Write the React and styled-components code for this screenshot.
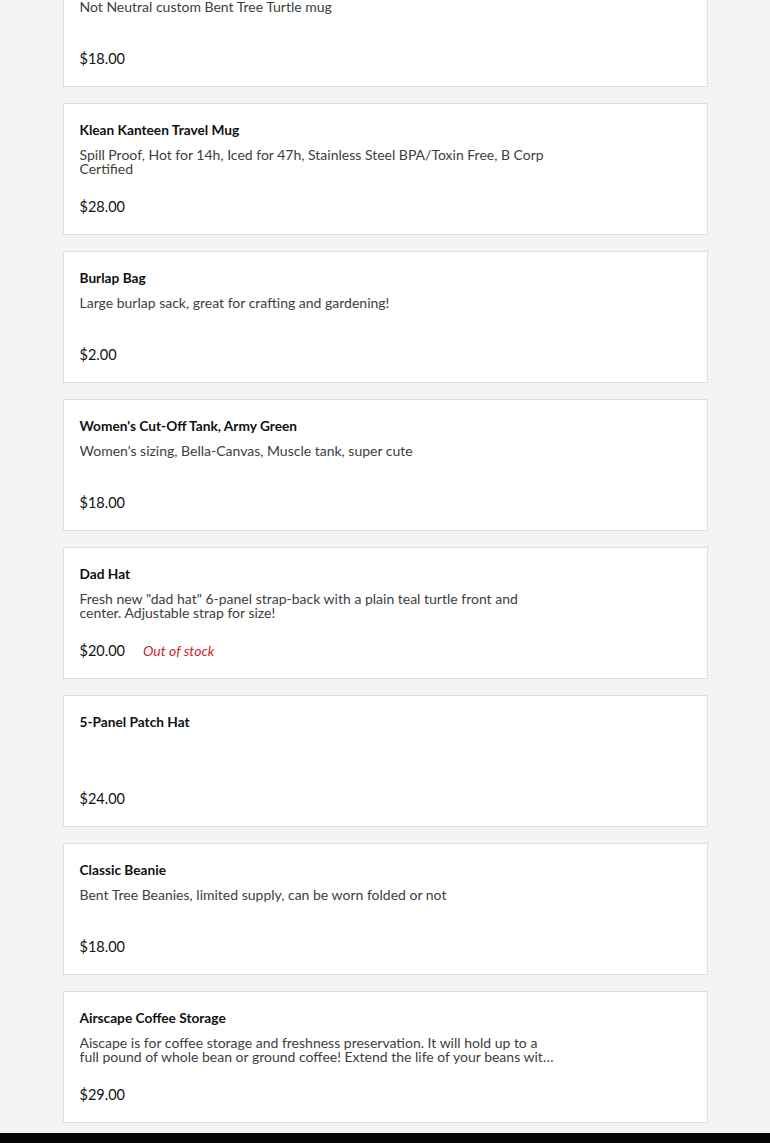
import React from 'react';
import styled, { createGlobalStyle } from 'styled-components';

const GlobalStyle = createGlobalStyle`
    html, body {
        margin: 0;
        padding: 0;
        background: #f3f5f4;
        font-family: Lato, "Liberation Sans", sans-serif;
        overflow: hidden;
    }
`;

const Page = styled.div`
    min-height: 1143px;
    display: flex;
    flex-direction: column;
`;

const List = styled.div`
    width: 645px;
    margin: -45px auto 0;
    padding-bottom: 10px;
    display: flex;
    flex-direction: column;
    gap: 16px;
`;

const Card = styled.div`
    box-sizing: border-box;
    height: 132px;
    background: #fff;
    border: 1px solid #dcdfde;
    padding: 16px 16px 17px;
    display: flex;
    flex-direction: column;
`;

const Title = styled.div`
    font-size: 13.7px;
    font-weight: 700;
    line-height: 20px;
    color: #111;
`;

const Description = styled.div`
    margin-top: 8px;
    max-width: 475px;
    height: 28px;
    font-size: 14px;
    line-height: 14px;
    color: #3d403f;
    display: -webkit-box;
    -webkit-line-clamp: 2;
    -webkit-box-orient: vertical;
    overflow: hidden;
`;

const PriceRow = styled.div`
    margin-top: auto;
    display: flex;
    align-items: center;
    gap: 18px;
    line-height: 20px;
`;

const Price = styled.span`
    font-size: 14.5px;
    color: #111;
`;

const Stock = styled.span`
    font-size: 14px;
    font-style: italic;
    color: #cc1f2f;
`;

const Footer = styled.div`
    flex: 1;
    background: #050505;
`;

const products = [
    { name: 'Bent Tree Turtle Mug', desc: 'Not Neutral custom Bent Tree Turtle mug', price: '$18.00' },
    { name: 'Klean Kanteen Travel Mug', desc: 'Spill Proof, Hot for 14h, Iced for 47h, Stainless Steel BPA/Toxin Free, B Corp Certified', price: '$28.00' },
    { name: 'Burlap Bag', desc: 'Large burlap sack, great for crafting and gardening!', price: '$2.00' },
    { name: "Women's Cut-Off Tank, Army Green", desc: "Women's sizing, Bella-Canvas, Muscle tank, super cute", price: '$18.00' },
    { name: 'Dad Hat', desc: 'Fresh new "dad hat" 6-panel strap-back with a plain teal turtle front and center. Adjustable strap for size!', price: '$20.00', outOfStock: true },
    { name: '5-Panel Patch Hat', desc: '', price: '$24.00' },
    { name: 'Classic Beanie', desc: 'Bent Tree Beanies, limited supply, can be worn folded or not', price: '$18.00' },
    { name: 'Airscape Coffee Storage', desc: 'Aiscape is for coffee storage and freshness preservation. It will hold up to a full pound of whole bean or ground coffee! Extend the life of your beans with an airtight seal that pushes out the air.', price: '$29.00' },
];

const App = () => {
    return (
        <Page>
            <GlobalStyle />
            <List>
                {products.map((p) => (
                    <Card key={p.name}>
                        <Title>{p.name}</Title>
                        <Description>{p.desc}</Description>
                        <PriceRow>
                            <Price>{p.price}</Price>
                            {p.outOfStock && <Stock>Out of stock</Stock>}
                        </PriceRow>
                    </Card>
                ))}
            </List>
            <Footer />
        </Page>
    );
};

export default App;
